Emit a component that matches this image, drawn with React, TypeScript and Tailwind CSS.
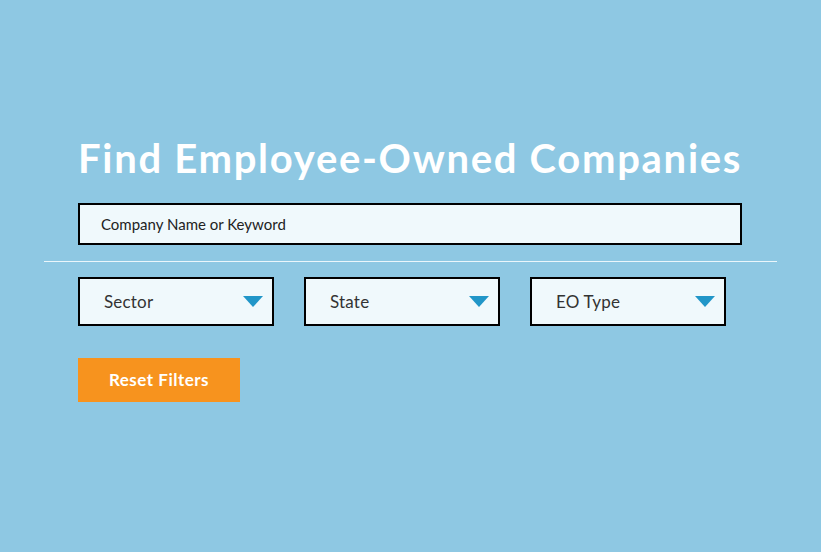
import { ReactNode } from 'react';

function Select({ label }: { label: string }) {
  return (
    <div className="w-[196px] h-[49px] border-2 border-black bg-[#f0f9fc] flex items-center justify-between pl-[24px] pr-[9px]">
      <span className="text-[17px] text-[#333] tracking-[0.2px]">{label}</span>
      <svg width="20" height="11" viewBox="0 0 20 11">
        <path d="M0 0 H20 L10 11 Z" fill="#2196c8" />
      </svg>
    </div>
  );
}

function Section({ children }: { children: ReactNode }) {
  return <div className="w-[664px] ml-[78px]">{children}</div>;
}

export default function App() {
  return (
    <div
      className="w-[821px] h-[552px] bg-[#8ec8e3] pt-[134px]"
      style={{ fontFamily: "Lato, 'Open Sans', sans-serif" }}
    >
      <Section>
        <h1 className="text-[40px] leading-[48px] font-bold text-white tracking-[1.7px] whitespace-nowrap">
          Find Employee-Owned Companies
        </h1>
        <div className="mt-[21px] h-[42px] border-2 border-black bg-[#f0f9fc] flex items-center pl-[21px]">
          <span className="text-[15px] text-[#222]">Company Name or Keyword</span>
        </div>
      </Section>
      <div className="mx-[44px] mt-[16px] h-px bg-[#eaf6fb]" />
      <Section>
        <div className="mt-[15px] flex gap-[30px]">
          <Select label="Sector" />
          <Select label="State" />
          <Select label="EO Type" />
        </div>
        <button className="mt-[32px] w-[162px] h-[44px] bg-[#f7931e] text-white font-bold text-[17px] tracking-[0.5px]">
          Reset Filters
        </button>
      </Section>
    </div>
  );
}
